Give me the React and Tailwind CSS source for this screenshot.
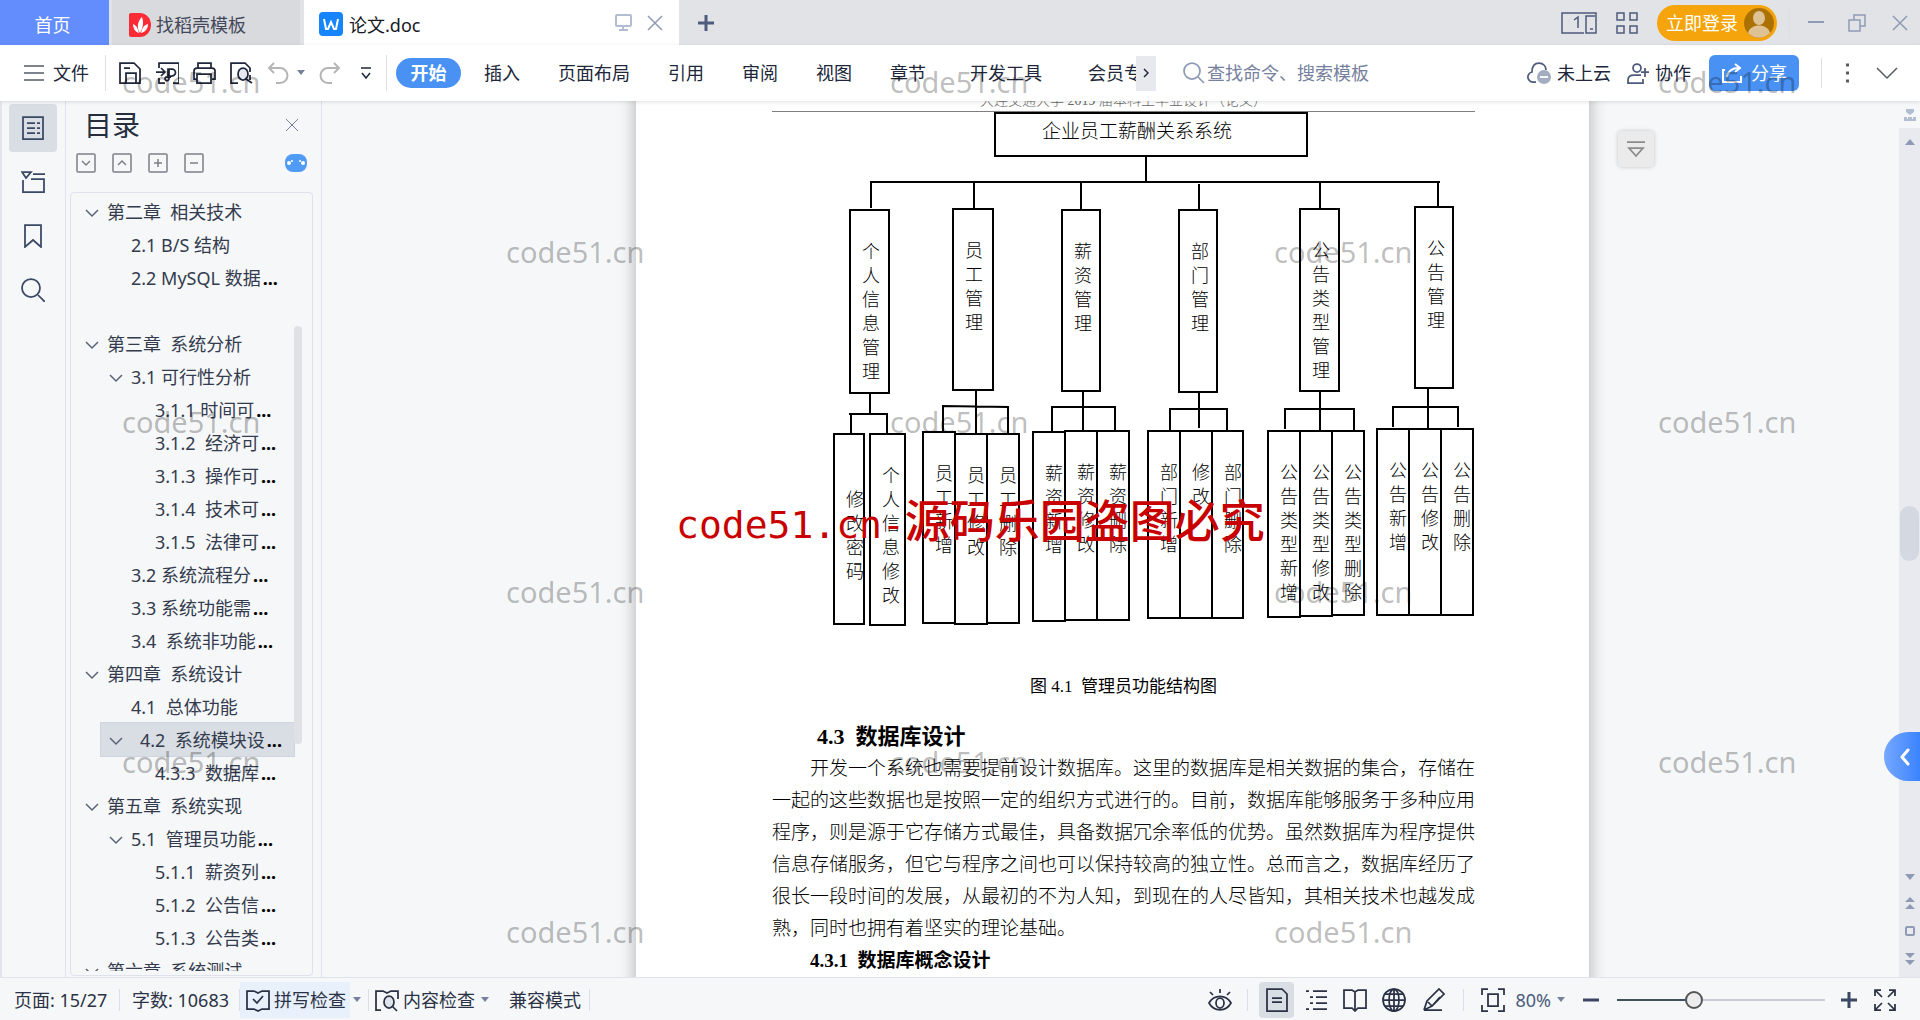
const MENU = ["插入", "页面布局", "引用", "审阅", "视图", "章节"];

const OUTLINE = [
  { text: "第二章  相关技术", level: 0, open: true },
  { text: "2.1 B/S 结构", level: 1 },
  { text: "2.2 MySQL 数据", level: 1, cut: true },
  { text: "", level: 0 },
  { text: "第三章  系统分析", level: 0, open: true },
  { text: "3.1 可行性分析", level: 1, open: true },
  { text: "3.1.1 时间可", level: 2, cut: true },
  { text: "3.1.2  经济可", level: 2, cut: true },
  { text: "3.1.3  操作可", level: 2, cut: true },
  { text: "3.1.4  技术可", level: 2, cut: true },
  { text: "3.1.5  法律可", level: 2, cut: true },
  { text: "3.2 系统流程分", level: 1, cut: true },
  { text: "3.3 系统功能需", level: 1, cut: true },
  { text: "3.4  系统非功能", level: 1, cut: true },
  { text: "第四章  系统设计", level: 0, open: true },
  { text: "4.1  总体功能", level: 1 },
  { text: "4.2  系统模块设", level: 1, open: true, cut: true, active: true },
  { text: "4.3.3  数据库", level: 2, cut: true },
  { text: "第五章  系统实现", level: 0, open: true },
  { text: "5.1  管理员功能", level: 1, open: true, cut: true },
  { text: "5.1.1  薪资列", level: 2, cut: true },
  { text: "5.1.2  公告信", level: 2, cut: true },
  { text: "5.1.3  公告类", level: 2, cut: true },
  { text: "第六章  系统测试", level: 0, open: true },
];

const INDENT = ["pl-[14px]", "pl-[38px]", "pl-[62px]"];

/* x, y, width, height on the diagram canvas */
const NODES = [
  { t: "个人信息管理", x: 77, y: 97, w: 41, h: 185 },
  { t: "员工管理", x: 180, y: 96, w: 42, h: 183 },
  { t: "薪资管理", x: 289, y: 97, w: 40, h: 183 },
  { t: "部门管理", x: 406, y: 97, w: 40, h: 184 },
  { t: "公告类型管理", x: 527, y: 96, w: 41, h: 184 },
  { t: "公告管理", x: 642, y: 94, w: 40, h: 183 },
  { t: "修改密码", x: 61, y: 321, w: 32, h: 192, skip: true },
  { t: "个人信息修改", x: 97, y: 321, w: 37, h: 193 },
  { t: "员工新增", x: 150, y: 319, w: 34, h: 193 },
  { t: "员工修改", x: 182, y: 321, w: 34, h: 192 },
  { t: "员工删除", x: 214, y: 321, w: 34, h: 191 },
  { t: "薪资新增", x: 260, y: 319, w: 34, h: 191 },
  { t: "薪资修改", x: 292, y: 318, w: 34, h: 191 },
  { t: "薪资删除", x: 324, y: 318, w: 34, h: 191 },
  { t: "部门新增", x: 375, y: 318, w: 34, h: 189 },
  { t: "修改", x: 407, y: 318, w: 34, h: 189 },
  { t: "部门删除", x: 439, y: 318, w: 33, h: 189 },
  { t: "公告类型新增", x: 495, y: 318, w: 34, h: 188 },
  { t: "公告类型修改", x: 527, y: 318, w: 34, h: 187 },
  { t: "公告类型删除", x: 559, y: 318, w: 34, h: 186 },
  { t: "公告新增", x: 604, y: 316, w: 34, h: 188 },
  { t: "公告修改", x: 636, y: 316, w: 34, h: 188 },
  { t: "公告删除", x: 668, y: 316, w: 34, h: 188 },
];

const LINKS =
  "M374 45V70M98 70H668M99 70V96M202 70V96M309 70V97M427 72V97M548 70V96M666 70V94" +
  "M98 282V302M77 302H116M79 302V321M115 302V321" +
  "M204 279V321M171 319V294L236 295V321" +
  "M311 280V318M280 319V295H343V318" +
  "M427 281V316M398 318V297H455V318" +
  "M548 280V318M513 317V297H582V318" +
  "M656 277V316M621 315V295H686V315";

const PARAGRAPH =
  "开发一个系统也需要提前设计数据库。这里的数据库是相关数据的集合，存储在一起的这些数据也是按照一定的组织方式进行的。目前，数据库能够服务于多种应用程序，则是源于它存储方式最佳，具备数据冗余率低的优势。虽然数据库为程序提供信息存储服务，但它与程序之间也可以保持较高的独立性。总而言之，数据库经历了很长一段时间的发展，从最初的不为人知，到现在的人尽皆知，其相关技术也越发成熟，同时也拥有着坚实的理论基础。";

function Icon({ w = 24, h = 24, sw = 2, className = "", children }) {
  return (
    <svg
      width={w}
      height={h}
      viewBox={`0 0 ${w} ${h}`}
      fill="none"
      stroke="currentColor"
      strokeWidth={sw}
      className={`shrink-0 ${className}`}
      aria-hidden="true"
    >
      {children}
    </svg>
  );
}

function Caret({ className = "" }) {
  return (
    <Icon w={8} h={6} className={`text-[#76819d] ${className}`}>
      <path d="M0 0h8L4 5z" fill="currentColor" stroke="none" />
    </Icon>
  );
}

function Rule({ className = "" }) {
  return <div className={`w-px shrink-0 bg-[#dcdfe5] ${className}`} />;
}

function TabBar() {
  return (
    <header className="flex h-[45px] shrink-0 items-stretch bg-[#e2e3e7]">
      <button className="w-[109px] bg-[#638dfc] pr-1 pt-1 text-white">首页</button>
      <button className="ml-[3px] flex w-[188px] items-center bg-[#d9dadd] pl-[17px] pt-1 text-[#43485a]">
        <Icon w={22} h={24} className="mr-[5px]">
          <path d="M2 0h9a11 12 0 0 1 0 24H2a2 2 0 0 1-2-2V2a2 2 0 0 1 2-2z" fill="#fb2c36" stroke="none" />
          <path d="M11 20C7 14 9 8 13 4c2 6 1 11-2 16zM10 20c-4-1-6-5-6-9 3 1 5 4 6 9zM12 20c1-5 3-8 7-9 0 5-3 8-7 9z" fill="white" stroke="none" />
        </Icon>
        找稻壳模板
      </button>
      <div className="ml-1 flex w-[375px] items-center bg-white pl-[15px] pr-4 text-[#16191f]">
        <Icon className="mr-1.5 mt-0.5">
          <rect width="24" height="24" rx="4" fill="#1684fc" stroke="none" />
          <path d="M5 7l2 10h2l3-7 3 7h2l2-10" stroke="white" strokeWidth="2" />
        </Icon>
        <button className="pt-1">论文.doc</button>
        <button aria-label="窗口显示" className="ml-auto text-[#b3bdd1]">
          <Icon w={17} h={18}>
            <rect x="1" y="1" width="15" height="11" rx="1" />
            <path d="M8 12v4M4 16h9" />
          </Icon>
        </button>
        <button aria-label="关闭标签" className="ml-[15px] text-[#8f9bb5]">
          <Icon w={16} h={16} sw={1.5}>
            <path d="M1 1l14 14M15 1L1 15" />
          </Icon>
        </button>
      </div>
      <button aria-label="新建标签" className="ml-[17px] text-[#4d5b7c]">
        <Icon w={20} h={20} sw={3}>
          <path d="M10 2v16M2 10h16" />
        </Icon>
      </button>
      <div className="ml-auto flex items-center pr-3 text-[#4d5b7c]">
        <button aria-label="页面视图">
          <Icon w={36} h={22} sw={1.5}>
            <path d="M23 21H1V1h34v20H25V4h9M13 8l4-3v11M29 17h3" />
          </Icon>
        </button>
        <button aria-label="应用" className="ml-[19px]">
          <Icon w={22} h={22} sw={1.5}>
            <path d="M1 1h7v7H1zM14 1h7v7h-7zM1 14h7v7H1zM14 14h7v7h-7z" />
          </Icon>
        </button>
        <button className="ml-[19px] flex h-9 w-[120px] items-center rounded-full bg-[#f5a50b] pl-[9px] text-white">
          立即登录
          <Icon w={30} h={30} className="ml-1.5">
            <circle cx="15" cy="15" r="15" fill="#ab7203" stroke="none" />
            <ellipse cx="15" cy="10" rx="6" ry="7" fill="#dfc294" stroke="none" />
            <path d="M4 25c2-10 20-10 22 0a15 15 0 0 1-22 0z" fill="#dfc294" stroke="none" />
          </Icon>
        </button>
        <Rule className="ml-3 h-[30px] bg-[#cfd1d7]" />
        <button aria-label="最小化" className="ml-[18px] text-[#8f9bb5]">
          <Icon w={16} h={16}><path d="M0 7h16" /></Icon>
        </button>
        <button aria-label="还原" className="ml-6 text-[#8f9bb5]">
          <Icon w={18} h={18} sw={1.5}><path d="M1 6h11v11H1zM6 6V1h11v11h-5" /></Icon>
        </button>
        <button aria-label="关闭" className="ml-[26px] text-[#8f9bb5]">
          <Icon w={16} h={16} sw={1.5}><path d="M1 1l14 14M15 1L1 15" /></Icon>
        </button>
      </div>
    </header>
  );
}

function QuickAccess() {
  return (
    <>
      <div className="ml-3 flex items-center gap-[13px]">
        <button aria-label="保存">
          <Icon sw={1.75}>
            <path d="M2 2h14l6 6v14H2zM8 22v-10h10v10M6 7h6" />
          </Icon>
        </button>
        <button aria-label="输出为PDF">
          <Icon sw={1.75}>
            <path d="M4 7V2h20v20h-6M4 17v5h6M1 11h9M6 7l4 4-4 4M13 8h4a3 3 0 0 1 0 7h-4zM14 8v10a2 2 0 1 1-3-2h5" />
          </Icon>
        </button>
        <button aria-label="打印">
          <Icon sw={1.75}>
            <path d="M6 7V2h13v5M5 18H2V10q0-3 3-3h15q3 0 3 3v8h-3M5 13h14v9H5z" />
          </Icon>
        </button>
        <button aria-label="打印预览">
          <Icon sw={1.75}>
            <path d="M9 22H2V2h14l5 5v4" />
            <ellipse cx="14" cy="13" rx="5" ry="6" fill="#e6e9ef" />
            <path d="M17 18l6 4M21 14v5" />
          </Icon>
        </button>
        <button aria-label="撤销" className="text-[#b5b5b5]">
          <Icon>
            <path d="M8 2L3 7l5 5M3 7h11a7 7 0 0 1 0 15H10" />
          </Icon>
        </button>
      </div>
      <Caret className="ml-[7px]" />
      <button aria-label="恢复" className="ml-[13px] text-[#b5b5b5]">
        <Icon>
          <path d="M16 2l5 5-5 5M21 7H10a7 7 0 0 0 0 15h4" />
        </Icon>
      </button>
      <button aria-label="更多命令" className="ml-[17px]">
        <Icon w={14} h={14} sw={1.5}>
          <path d="M2 2h10M3 7l4 5 4-5" />
        </Icon>
      </button>
    </>
  );
}

function Toolbar() {
  return (
    <div className="relative z-10 flex h-14 shrink-0 items-center whitespace-nowrap bg-white pl-[22px] pr-[22px] text-[#20273a] shadow-[0_1px_4px_#0000001f]">
      <button className="flex items-center gap-[7px]">
        <Icon sw={1.5} className="text-[#565b66]">
          <path d="M2 5h20M2 12h20M2 19h20" />
        </Icon>
        文件
      </button>
      <Rule className="ml-4 h-9" />
      <QuickAccess />
      <Rule className="ml-[13px] h-9" />
      <button className="ml-[9px] h-[30px] w-[65px] shrink-0 rounded-full bg-[#4991f2] font-bold leading-[30px] text-white">开始</button>
      <nav className="ml-[23px] flex gap-[38px]">
        {MENU.map((m) => (
          <button key={m}>{m}</button>
        ))}
      </nav>
      <div className="ml-11 flex w-[166px] gap-[46px] overflow-hidden">
        <button>开发工具</button>
        <button>会员专享</button>
      </div>
      <button aria-label="更多选项卡" className="flex h-[35px] w-5 shrink-0 items-center justify-center bg-[#e7e9ee]">
        <Icon w={6} h={10} sw={1.5}><path d="M1 1l4 4-4 4" /></Icon>
      </button>
      <label className="ml-[27px] flex items-center text-[#76819d]">
        <Icon sw={1.75} className="text-[#8f9bb5]">
          <circle cx="9" cy="10" r="8" />
          <path d="M15 16l6 6" />
        </Icon>
        <input aria-label="查找命令、搜索模板" placeholder="查找命令、搜索模板" className="w-[180px] bg-transparent outline-none placeholder:text-[#76819d]" />
      </label>
      <div className="ml-auto flex items-center">
        <button className="flex items-center gap-1.5">
          <Icon sw={1.75} className="text-[#4d5b7c]">
            <path d="M9 21H7a5 5 0 0 1-2-10C5 5 8 2 12 2s7 3 7 7" />
            <circle cx="17" cy="16" r="7" fill="#a3adc0" stroke="none" />
            <path d="M13 16h8" stroke="white" />
          </Icon>
          未上云
        </button>
        <button className="ml-4 flex items-center gap-1.5">
          <Icon w={22} sw={1.75} className="text-[#4d5b7c]">
            <circle cx="10" cy="7" r="4" />
            <path d="M14 14H7q-6 0-6 5v3h15v-4M14 11h8M18 7v9" />
          </Icon>
          协作
        </button>
        <button className="ml-[18px] flex h-9 w-[90px] items-center gap-2 rounded-md bg-[#4991f2] pl-3 text-white">
          <Icon w={22} h={22}>
            <path d="M4 8H2v12h18v-6M6 15c1-6 5-9 12-9M14 2l5 4-5 4" />
          </Icon>
          分享
        </button>
        <Rule className="ml-[22px] h-[30px]" />
        <button aria-label="更多" className="ml-6 text-[#565b66]">
          <Icon w={4} h={22}>
            <path d="M0 3h3M0 11h3M0 19h3" strokeWidth="3" />
          </Icon>
        </button>
        <button aria-label="收起功能区" className="ml-[26px] text-[#565b66]">
          <Icon w={22} h={14} sw={1.5}>
            <path d="M1 2l10 10L21 2" />
          </Icon>
        </button>
      </div>
    </div>
  );
}

function SideRail() {
  return (
    <div className="flex w-[66px] shrink-0 flex-col items-center gap-[6px] border-l-2 border-r border-l-[#e3e5ea] border-r-[#dfe2ea] pr-0.5 pt-[3px] text-[#3b4863]">
      <button aria-label="目录" className="flex h-12 w-12 items-center justify-center rounded bg-[#d9dee5]">
        <Icon sw={1.75}>
          <path d="M2 1h20v22H2zM6 7h8M6 12h8M6 17h8M16 7h3M16 12h3M16 17h3" />
        </Icon>
      </button>
      <button aria-label="章节" className="flex h-12 w-12 items-center justify-center">
        <Icon sw={1.75}>
          <path d="M1 2h9L5 8zM12 4h12M10 9h13v13H2V10" />
        </Icon>
      </button>
      <button aria-label="书签" className="flex h-12 w-12 items-center justify-center">
        <Icon sw={1.75}>
          <path d="M4 1h16v22l-8-7-8 7z" />
        </Icon>
      </button>
      <button aria-label="查找" className="flex h-12 w-12 items-center justify-center">
        <Icon sw={1.75}>
          <circle cx="10" cy="10" r="9" />
          <path d="M17 17l7 7" />
        </Icon>
      </button>
    </div>
  );
}

function Outline() {
  const tools = [
    ["全部展开", "M6 8l4 4 4-4"],
    ["全部收起", "M6 12l4-4 4 4"],
    ["展开", "M6 10h8M10 6v8"],
    ["折叠", "M6 10h8"],
  ];
  return (
    <aside className="flex w-[256px] shrink-0 flex-col border-r border-[#dfe2ea] pl-1 text-[#343b4d]">
      <div className="flex h-12 shrink-0 items-center pl-[14px] pr-[22px]">
        <h2 className="text-[28px] leading-8 text-[#262d3d]">目录</h2>
        <button aria-label="关闭目录" className="ml-auto text-[#76819d]">
          <Icon w={14} h={14} sw={1}><path d="M1 1l12 12M13 1L1 13" /></Icon>
        </button>
      </div>
      <div className="flex h-[43px] shrink-0 items-start gap-4 pl-[6px] pr-[14px] pt-1">
        {tools.map(([name, d]) => (
          <button key={name} aria-label={name} className="text-[#7c8087]">
            <Icon w={20} h={20} sw={1.5}>
              <rect x="1" y="1" width="18" height="18" rx="1" />
              <path d={d} />
            </Icon>
          </button>
        ))}
        <button aria-label="智能识别目录" className="ml-auto mt-px">
          <Icon w={22} h={18}>
            <rect width="22" height="18" rx="8" fill="#4f9bf5" stroke="none" />
            <g fill="white" stroke="none">
              <circle cx="4" cy="9" r="2" />
              <circle cx="7" cy="7" r="1" />
              <circle cx="15" cy="7" r="1" />
              <circle cx="18" cy="9" r="2" />
            </g>
          </Icon>
        </button>
      </div>
      <div className="relative mb-px mr-2 min-h-0 flex-1 rounded-sm border border-[#dfe2ea]">
        <ul className="h-full overflow-hidden border-b-4 border-transparent pr-[18px] pt-0.5">
          {OUTLINE.map((o, i) => (
            <li key={i} className={o.active ? "h-[33px] pl-[30px]" : "h-[33px]"}>
              <button
                className={`flex h-full w-full items-center whitespace-pre text-left ${
                  o.active ? "bg-[#d9dee5] pl-2 outline outline-[#cfd5de]" : INDENT[o.level]
                }`}
              >
                <span className={`shrink-0 text-[#5b6477] ${o.active ? "w-[31px]" : "w-[22px]"}`}>
                  {o.open && (
                    <Icon w={14} h={9} sw={1.5} className="mt-1">
                      <path d="M1 1l6 6 6-6" />
                    </Icon>
                  )}
                </span>
                {o.text}
                {o.cut && <span className="pl-0.5 font-bold text-black">...</span>}
              </button>
            </li>
          ))}
        </ul>
        <div className="absolute right-[10px] top-[133px] h-[418px] w-2 rounded-full bg-[#dfe2e5]" />
      </div>
    </aside>
  );
}

function Diagram() {
  return (
    <figure>
      <div className="relative h-[559px]">
        <svg width="703" height="558" viewBox="0 0 703 558" className="absolute left-0 top-0" fill="none" stroke="black" strokeWidth="2" aria-hidden="true">
          <path d={LINKS} />
        </svg>
        <div className="absolute left-[222px] top-0 h-[45px] w-[314px] border-2 border-black pl-[46px] leading-[36px]">
          企业员工薪酬关系系统
        </div>
        {NODES.map((n) => (
          <div
            key={n.x}
            className="absolute overflow-hidden border-2 border-black pl-[11px] pt-[29px] text-[18px] leading-6"
            style={{ left: n.x, top: n.y, width: n.w, height: n.h }}
          >
            <div className={`w-[18px] break-all ${n.skip ? "pt-6" : ""}`}>{n.t}</div>
          </div>
        ))}
      </div>
      <figcaption className="text-center text-[17px] font-normal">图 4.1&nbsp; 管理员功能结构图</figcaption>
    </figure>
  );
}

function Page() {
  return (
    <article className="-mt-[11px] w-[953px] shrink-0 bg-white pl-[136px] pr-[114px] font-['Liberation_Serif','Noto_Sans_CJK_SC',serif] text-[19px] font-light leading-8 text-black shadow-[0_0_16px_#0000004d]">
      <div className="border-b border-[#7f7f7f] text-center text-[14px] leading-[21px] text-[#6b6b6b]">
        大连交通大学 2019 届本科生毕业设计（论文）
      </div>
      <Diagram />
      <h2 className="mt-[18px] pl-[45px] text-[22px] font-bold leading-8">4.3&nbsp; 数据库设计</h2>
      <p className="indent-[38px] text-justify">{PARAGRAPH}</p>
      <h3 className="pl-[38px] font-bold">4.3.1&nbsp; 数据库概念设计</h3>
      <div className="h-8" />
    </article>
  );
}

function ScrollRail() {
  return (
    <div className="relative flex w-[21px] shrink-0 flex-col items-center bg-[#e8eaef] text-[#8f9bb5]">
      <div className="flex h-[27px] w-full items-center justify-center bg-[#f5f7f9] text-[#b3bdd1]">
        <Icon w={12} h={12}>
          <path d="M2 0h8v3L6 6 2 3zM0 8h3v2h1V8h4v2h1V8h3v4H0z" fill="currentColor" stroke="none" />
        </Icon>
      </div>
      <Icon w={10} h={6} className="mt-[11px]"><path d="M0 6h10L5 0z" fill="currentColor" stroke="none" /></Icon>
      <div className="mt-[361px] h-[55px] w-[19px] rounded-full bg-[#d4d8e0]" />
      <div className="mb-3 mt-auto flex flex-col items-center gap-[17px]">
        <Icon w={10} h={6}><path d="M0 0h10L5 6z" fill="currentColor" stroke="none" /></Icon>
        <Icon w={10} h={12}><path d="M0 5h10L5 0zM0 12h10L5 7z" fill="currentColor" stroke="none" /></Icon>
        <Icon w={10} h={10}><rect x="1" y="1" width="8" height="8" rx="1" /></Icon>
        <Icon w={10} h={12}><path d="M0 0h10L5 5zM0 7h10l-5 5z" fill="currentColor" stroke="none" /></Icon>
      </div>
      <button aria-label="展开侧栏" className="absolute right-0 top-[631px] flex h-[49px] w-9 items-center justify-center rounded-l-full bg-linear-to-r from-[#75a7ff] to-[#3a83ff] pl-1.5 text-white">
        <Icon w={10} h={18} sw={3}><path d="M8 2L2 9l6 7" strokeLinecap="round" strokeLinejoin="round" /></Icon>
      </button>
    </div>
  );
}

function StatusBar() {
  return (
    <footer className="flex h-[43px] shrink-0 items-center whitespace-nowrap border-t border-[#dfe2ea] bg-[#f5f7f9] pl-[14px] pr-6 pt-px text-[#2b3245]">
      <span className="w-[97px]">页面: 15/27</span>
      <Rule className="ml-2 h-[22px]" />
      <span className="ml-3 w-[99px]">字数: 10683</span>
      <Rule className="ml-2 h-[22px]" />
      <button className="flex h-9 items-center gap-1 bg-[#e8f0fc] pl-1.5 pr-1">
        <Icon sw={1.75}>
          <path d="M8 3H1v18h7l4 2 4-2h7V3h-7l-4 2-4-2M7 11l4 4 6-7" />
        </Icon>
        拼写检查
      </button>
      <Caret className="ml-[3px]" />
      <Rule className="ml-[7px] h-[22px]" />
      <button className="ml-1.5 flex items-center gap-1">
        <Icon sw={1.75}>
          <path d="M6 22H1V3h7l4 2 4-2h7v8" />
          <ellipse cx="14" cy="14" rx="5" ry="6" fill="#dfe3ea" />
          <path d="M17 18l5 5" />
        </Icon>
        内容检查
      </button>
      <Caret className="ml-[6px]" />
      <span className="ml-5">兼容模式</span>
      <Rule className="ml-2 h-[22px]" />

      <div className="ml-auto flex items-center">
        <button aria-label="护眼模式">
          <Icon sw={1.75}>
            <path d="M1 15c5-9 17-9 22 0-5 9-17 9-22 0zM12 1v4M2 4l3 3M22 4l-3 3" />
            <ellipse cx="12" cy="15" rx="4" ry="5" />
          </Icon>
        </button>
        <Rule className="ml-[15px] h-[22px]" />
        <button aria-label="页面视图" className="ml-[11px] flex h-9 w-[35px] items-center justify-center rounded-sm bg-[#d9dee5]">
          <Icon sw={1.75}>
            <path d="M2 1h15l5 5v17H2zM7 10h10M7 14h10" />
          </Icon>
        </button>
        <button aria-label="大纲视图" className="ml-[11px]">
          <Icon sw={1.75}>
            <path d="M1 3h3M8 3h14M5 9h3M11 9h11M5 15h3M11 15h11M1 21h3M8 21h14" />
          </Icon>
        </button>
        <button aria-label="阅读版式" className="ml-3.5">
          <Icon sw={1.75}>
            <path d="M12 4l-3-2H1v18h8l3 3 3-3h8V2h-8zM12 4v18" />
          </Icon>
        </button>
        <button aria-label="Web版式" className="ml-[15px]">
          <Icon sw={1.75}>
            <circle cx="12" cy="12" r="11" />
            <ellipse cx="12" cy="12" rx="5" ry="11" />
            <path d="M12 1v22M1 12h22M3 6h18M3 18h18" />
          </Icon>
        </button>
        <button aria-label="写作模式" className="ml-4">
          <Icon sw={1.75}>
            <path d="M2 22l3-9L17 1l5 5L10 18l-8 4h18M6 14l4 4M18 9l-8 9" />
          </Icon>
        </button>
        <Rule className="ml-[17px] h-[22px]" />
        <button aria-label="最佳显示比例" className="ml-[17px]">
          <Icon sw={1.75}>
            <path d="M1 7V1h6M17 1h6v6M23 17v6h-6M7 23H1v-6M7 6h10v12H7z" />
          </Icon>
        </button>
        <button className="ml-2.5 flex items-center gap-1.5 text-[#4d5b7c]">
          80% <Caret />
        </button>
        <button aria-label="缩小" className="ml-[18px] text-[#3b4863]">
          <Icon w={16} h={16} sw={3}><path d="M0 8h16" /></Icon>
        </button>
        <input
          type="range"
          aria-label="显示比例"
          min="0"
          max="100"
          defaultValue="36"
          className="ml-[18px] h-5 w-[208px] appearance-none bg-[linear-gradient(90deg,#3f5159_0_36%,#c9cdd5_36%_100%)] bg-[length:100%_2px] bg-center bg-no-repeat [&::-webkit-slider-thumb]:h-[18px] [&::-webkit-slider-thumb]:w-[18px] [&::-webkit-slider-thumb]:appearance-none [&::-webkit-slider-thumb]:rounded-full [&::-webkit-slider-thumb]:border-2 [&::-webkit-slider-thumb]:border-[#555555] [&::-webkit-slider-thumb]:bg-[#ececec]"
        />
        <button aria-label="放大" className="ml-4 text-[#3b4863]">
          <Icon w={16} h={16} sw={3}><path d="M0 8h16M8 0v16" /></Icon>
        </button>
        <button aria-label="全屏显示" className="ml-[17px]">
          <Icon w={22} h={22} sw={1.75}>
            <path d="M1 7V1h6M1 1l7 7M15 1h6v6M21 1l-7 7M21 15v6h-6M21 21l-7-7M7 21H1v-6M1 21l7-7" />
          </Icon>
        </button>
      </div>
    </footer>
  );
}

/* Staggered site marks plus the red notice across the page */
function Watermark() {
  return (
    <div className="pointer-events-none absolute inset-0 z-20 overflow-hidden">
      {[0, 1, 2, 3, 4, 5].map((row) => (
        <div
          key={row}
          className={`flex h-[170px] pt-[62px] text-[29px] leading-10 text-black/27 ${row % 2 ? "pl-[506px]" : "pl-[122px]"}`}
        >
          {(row % 2 ? [0, 1] : [0, 1, 2]).map((n) => (
            <span key={n} className="w-[768px] shrink-0">code51.cn</span>
          ))}
        </div>
      ))}
      <div className="absolute left-[676px] top-[494px] flex items-baseline whitespace-nowrap text-[45px] font-medium leading-[54px] text-[#c90000]">
        <span className="font-['DejaVu_Sans_Mono',monospace] text-[38px]">code51.cn-</span>
        源码乐园盗图必究
      </div>
    </div>
  );
}

export default function App() {
  return (
    <div className="relative flex h-screen flex-col overflow-hidden bg-[#f5f7f9] font-['Noto_Sans','Noto_Sans_CJK_SC',sans-serif] text-[18px] leading-6">
      <TabBar />
      <Toolbar />
      <div className="flex min-h-0 flex-1">
        <SideRail />
        <Outline />
        <main className="relative flex min-w-0 flex-1 items-start justify-center overflow-hidden pl-[4px]">
          <Page />
          <button aria-label="页眉页脚选项" className="absolute right-[245px] top-[30px] flex h-9 w-9 items-center justify-center rounded-sm bg-[#ebebeb] text-[#8c8c8c] shadow-[0_0_4px_#00000033]">
            <Icon w={18} h={18} sw={1.75}>
              <path d="M0 2h18M2 8h14l-7 8z" />
            </Icon>
          </button>
        </main>
        <ScrollRail />
      </div>
      <StatusBar />
      <Watermark />
    </div>
  );
}
